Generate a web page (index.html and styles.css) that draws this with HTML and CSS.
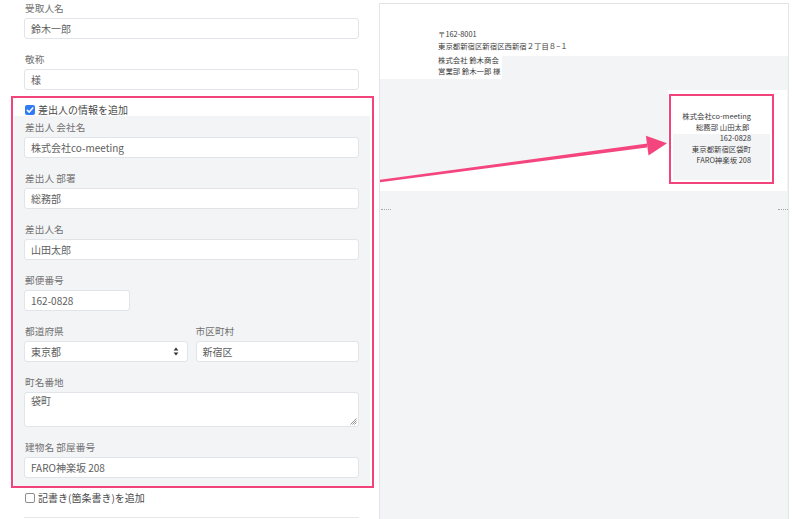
FILE: index.html
```html
<!DOCTYPE html>
<html lang="ja">
<head>
<meta charset="utf-8">
<title>宛名印刷</title>
<link rel="stylesheet" href="styles.css">
</head>
<body>
<div class="page">
  <div class="form">
    <div class="top-fields">
      <div class="field">
        <div class="label">受取人名</div>
        <div class="input">鈴木一郎</div>
      </div>
      <div class="field field-last">
        <div class="label">敬称</div>
        <div class="input">様</div>
      </div>
    </div>

    <div class="sender">
      <div class="check-row">
        <span class="cb cb-on"><svg viewBox="0 0 10 10" width="10" height="10"><path d="M2.3 5.2 L4.2 7.1 L7.8 2.9" fill="none" stroke="#fff" stroke-width="1.5" stroke-linecap="round" stroke-linejoin="round"/></svg></span>
        <span>差出人の情報を追加</span>
      </div>
      <div class="sender-body">
        <div class="field">
          <div class="label">差出人 会社名</div>
          <div class="input">株式会社co-meeting</div>
        </div>
        <div class="field">
          <div class="label">差出人 部署</div>
          <div class="input">総務部</div>
        </div>
        <div class="field">
          <div class="label">差出人名</div>
          <div class="input">山田太郎</div>
        </div>
        <div class="field">
          <div class="label">郵便番号</div>
          <div class="input input-zip">162-0828</div>
        </div>
        <div class="field field-row">
          <div class="col">
            <div class="label">都道府県</div>
            <div class="input input-select">東京都<svg class="sel-icon" viewBox="0 0 6 9" width="6" height="9"><path d="M3 0.6 L5.4 3.4 H0.6 Z M3 8.4 L5.4 5.6 H0.6 Z" fill="#333"/></svg></div>
          </div>
          <div class="col">
            <div class="label label-flush">市区町村</div>
            <div class="input">新宿区</div>
          </div>
        </div>
        <div class="field">
          <div class="label">町名番地</div>
          <div class="input input-area">袋町<svg class="grip" viewBox="0 0 8 8" width="8" height="8"><path d="M7.5 1.5 L1.5 7.5 M7.5 3.5 L3.5 7.5 M7.5 5.5 L5.5 7.5" stroke="#777" stroke-width="0.8" fill="none"/></svg></div>
        </div>
        <div class="field field-last">
          <div class="label">建物名 部屋番号</div>
          <div class="input">FARO神楽坂 208</div>
        </div>
      </div>
    </div>

    <div class="check-row check-row-2">
      <span class="cb"></span>
      <span>記書き(箇条書き)を追加</span>
    </div>
    <div class="next-input"></div>
  </div>

  <div class="preview">
    <div class="env-top">
      <p>〒162-8001</p>
      <p>東京都新宿区新宿区西新宿２丁目８−１</p>
    </div>
    <div class="env-name">
      <p>株式会社 鈴木商会</p>
      <p>営業部 鈴木一郎 様</p>
    </div>
    <div class="env-sender-row">
      <div class="env-sender-wrap">
        <div class="env-sender">
          <p>株式会社co-meeting</p>
          <p>総務部 山田太郎&nbsp;</p>
          <p>162-0828</p>
          <p>東京都新宿区袋町</p>
          <p>FARO神楽坂 208</p>
        </div>
      </div>
    </div>
    <div class="folds"><span class="fold"></span><span class="fold"></span></div>
    <svg class="arrow" viewBox="0 0 288 58" width="288" height="58">
      <polygon points="0,48 287,10.3 288,10.3 288,58 0,58" fill="#ffffff"/>
      <polygon points="0,46.8 267.5,10.6 266.9,14.6 0,49.2" fill="#f5457e"/>
      <polygon points="287,10.3 265.9,2.7 268.5,22.5" fill="#f5457e"/>
    </svg>
  </div>
</div>
</body>
</html>
```

FILE: styles.css
```css
html, body {
  margin: 0;
  padding: 0;
  height: 519px;
  overflow: hidden;
  background: #ffffff;
}

body {
  font-family: "Noto Sans CJK JP", "Noto Sans", sans-serif;
  color: #555;
}

p {
  margin: 0;
}

.page {
  display: flex;
  align-items: flex-start;
  width: 800px;
}

/* ---------- form column ---------- */
.form {
  width: 379px;
  flex: none;
  padding-top: 2px;
}

.top-fields {
  padding: 0 20px 0 24px;
}

.field {
  margin-bottom: 14px;
}

.field-last {
  margin-bottom: 6px;
}

.sender-body .field-last {
  margin-bottom: 0;
}

.label {
  font-size: 9.6px;
  line-height: 13px;
  height: 13px;
  color: #707070;
  padding-left: 1px;
  margin-bottom: 3px;
  white-space: nowrap;
  letter-spacing: 0.1px;
}

.label-flush {
  padding-left: 0;
}

.input {
  position: relative;
  box-sizing: border-box;
  height: 21px;
  border: 1px solid #e1e4e8;
  border-radius: 3px;
  background: #fff;
  padding-left: 6px;
  font-size: 10px;
  line-height: 19px;
  color: #5e5e5e;
  white-space: nowrap;
}

.input-zip {
  width: 106px;
}

.input-select {
  padding-right: 14px;
}

.sel-icon {
  position: absolute;
  right: 8px;
  top: 5px;
}

.input-area {
  height: 35px;
  line-height: 14px;
  padding-top: 1px;
}

.grip {
  position: absolute;
  right: 1px;
  bottom: 1px;
}

.field-row {
  display: grid;
  grid-template-columns: 1fr 1fr;
  column-gap: 8px;
}

/* sender box */
.sender {
  box-sizing: border-box;
  width: 363px;
  margin-left: 11px;
  border: 2px solid #f3437b;
}

.check-row {
  display: flex;
  align-items: center;
  padding-left: 12px;
  padding-top: 5px;
  font-size: 10px;
  line-height: 13px;
  color: #4a4a4a;
}

.cb {
  box-sizing: border-box;
  width: 10px;
  height: 10px;
  margin-right: 3px;
  border: 1px solid #8c8c8c;
  border-radius: 2px;
  background: #fff;
  flex: none;
  display: flex;
}

.cb-on {
  border: none;
  background: #2f7cf6;
}

.sender-body {
  margin: 0 2px 0 1px;
  padding: 5px 11px 8px 10px;
  background: #f3f4f6;
}

.check-row-2 {
  padding-left: 25px;
  padding-top: 3px;
}

.next-input {
  margin: 13px 20px 0 24px;
  height: 20px;
  border-top: 1px solid #e6e7ea;
}

/* ---------- envelope preview ---------- */
.preview {
  position: relative;
  box-sizing: border-box;
  width: 410px;
  height: 540px;
  margin-top: 3px;
  border: 1px solid #e3e4e6;
  background: #f3f4f6;
  color: #3a3a3a;
  font-size: 7.4px;
  flex: none;
}

.env-top {
  box-sizing: border-box;
  height: 52px;
  padding: 24px 0 0 58px;
  background: #fff;
  line-height: 12px;
  white-space: nowrap;
}

.env-name {
  position: relative;
  box-sizing: border-box;
  width: 122px;
  margin-top: -2px;
  padding: 0 0 3px 58px;
  background: #fff;
  line-height: 11px;
  white-space: nowrap;
}

.env-sender-row {
  display: flex;
  justify-content: flex-end;
  margin-top: 11px;
  margin-right: 1px;
}

.env-sender-wrap {
  background: #fff;
  padding: 4px 13px 7px 1px;
}

.env-sender {
  box-sizing: border-box;
  width: 105px;
  height: 90px;
  border: 2px solid #f3437b;
  padding: 14px 21px 0 0;
  text-align: right;
  line-height: 11px;
  white-space: nowrap;
  background: linear-gradient(#f3f4f6, #f3f4f6) no-repeat 2px 38px / 97px 46px, #fff;
}

.folds {
  display: flex;
  justify-content: space-between;
  margin-top: 18px;
  padding-left: 1px;
}

.fold {
  width: 10px;
  height: 0;
  border-top: 1px dotted #a9a9a9;
}

.arrow {
  position: absolute;
  left: 0;
  top: 129px;
  display: block;
}
```
